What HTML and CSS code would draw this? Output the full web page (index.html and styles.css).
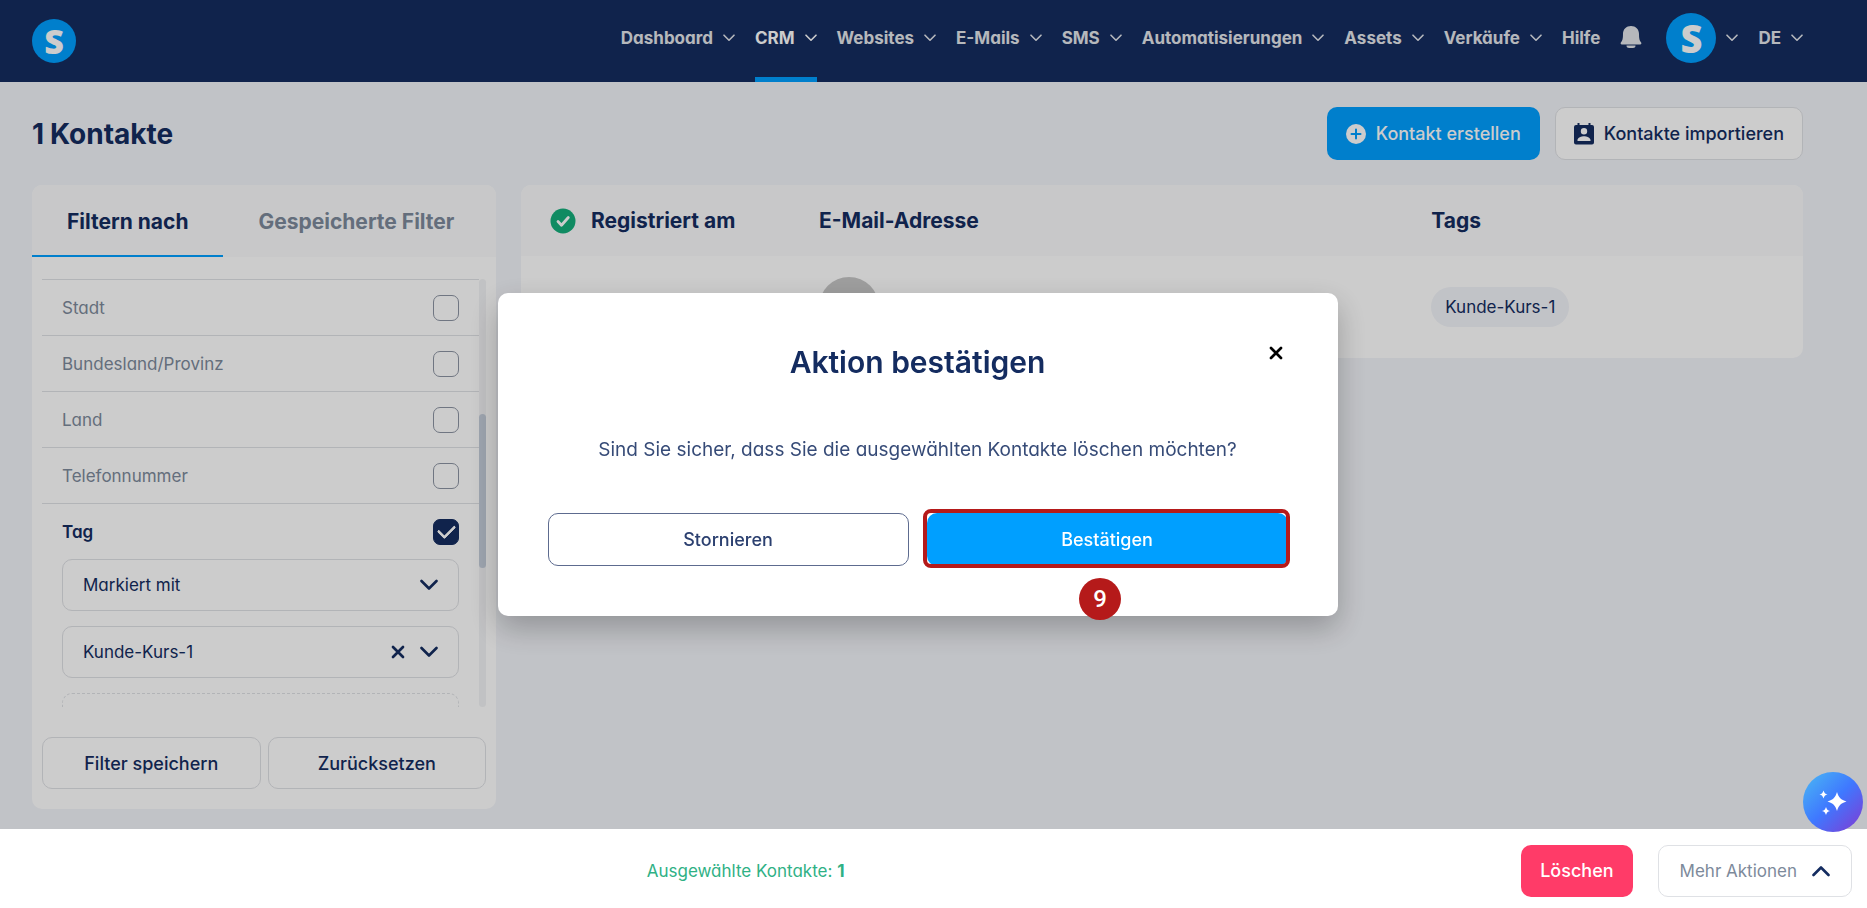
FILE: index.html
```html
<!DOCTYPE html>
<html lang="de">
<head>
    <meta charset="UTF-8">
    <meta name="viewport" content="width=device-width, initial-scale=1.0">
    <title>Kontakte</title>
    <link rel="stylesheet" href="styles.css">
</head>
<body>
    <!-- shared icons -->
    <svg class="icon-defs" aria-hidden="true">
        <symbol id="chevron" viewBox="0 0 12 8">
            <path d="M1 1.2l5 5 5-5" fill="none" stroke="currentColor" stroke-width="1.6" stroke-linecap="round" stroke-linejoin="round"/>
        </symbol>
        <symbol id="chevron-bold" viewBox="0 0 18 12">
            <path d="M1.500 2L9 9.500 16.500 2" fill="none" stroke="currentColor" stroke-width="2.6" stroke-linecap="round" stroke-linejoin="round"/>
        </symbol>
        <symbol id="cross" viewBox="0 0 14 14">
            <path d="M2 2l10 10M12 2L2 12" fill="none" stroke="currentColor" stroke-width="2.7" stroke-linecap="round"/>
        </symbol>
    </svg>

    <header class="header">
        <a href="#" class="logo">S</a>
        <nav class="nav">
            <a href="#" class="nav-item">Dashboard <svg class="chevron"><use href="#chevron"/></svg></a>
            <a href="#" class="nav-item active">CRM <svg class="chevron"><use href="#chevron"/></svg></a>
            <a href="#" class="nav-item">Websites <svg class="chevron"><use href="#chevron"/></svg></a>
            <a href="#" class="nav-item">E-Mails <svg class="chevron"><use href="#chevron"/></svg></a>
            <a href="#" class="nav-item">SMS <svg class="chevron"><use href="#chevron"/></svg></a>
            <a href="#" class="nav-item">Automatisierungen <svg class="chevron"><use href="#chevron"/></svg></a>
            <a href="#" class="nav-item">Assets <svg class="chevron"><use href="#chevron"/></svg></a>
            <a href="#" class="nav-item">Verkäufe <svg class="chevron"><use href="#chevron"/></svg></a>
            <a href="#" class="nav-item">Hilfe</a>
            <button class="bell" aria-label="Benachrichtigungen">
                <svg width="22" height="24" viewBox="0 0 22 24" fill="currentColor">
                    <path d="M11 1c4.600 0 8 3.200 8 8 0 4.600.5 6.700 2 8.300.8.900.3 2.200-.8 2.200H1.800c-1.100 0-1.600-1.300-.8-2.200C2.500 15.700 3 13.600 3 9c0-4.800 3.400-8 8-8z"/>
                    <path d="M6.500 20.500h9c0 1.800-1.200 2.500-2.500 2.500H9c-1.300 0-2.500-.7-2.500-2.500z"/>
                </svg>
            </button>
            <button class="nav-item account"><span class="logo avatar-logo">S</span> <svg class="chevron"><use href="#chevron"/></svg></button>
            <button class="nav-item language">DE <svg class="chevron"><use href="#chevron"/></svg></button>
        </nav>
    </header>

    <main class="page">
        <div class="page-head">
            <h1><span>1</span><span>Kontakte</span></h1>
            <div class="page-actions">
                <button class="btn btn-primary">
                    <svg width="20" height="20" viewBox="0 0 20 20"><circle cx="10" cy="10" r="10" fill="#fff"/><path d="M10 5.500v9M5.500 10h9" stroke="#009fff" stroke-width="2" stroke-linecap="round"/></svg>
                    Kontakt erstellen
                </button>
                <button class="btn btn-outline">
                    <svg width="20" height="22" viewBox="0 0 20 22"><path fill="currentColor" fill-rule="evenodd" d="M3.500 0h2v2h9V0h2v2H18a2 2 0 0 1 2 2v15.500a2 2 0 0 1-2 2H2a2 2 0 0 1-2-2V4a2 2 0 0 1 2-2h1.500zM10 5a3.200 3.200 0 1 0 0 6.400A3.200 3.200 0 0 0 10 5zM3.500 18h13v-1c0-2.500-4-3.800-6.500-3.800S3.500 14.500 3.500 17z"/></svg>
                    Kontakte importieren
                </button>
            </div>
        </div>

        <div class="columns">
            <section class="card filters">
                <div class="tabs">
                    <button class="tab active">Filtern nach</button>
                    <button class="tab">Gespeicherte Filter</button>
                </div>
                <div class="filter-scroll">
                    <div class="filter-list">
                        <label class="filter-row">Stadt <input type="checkbox"></label>
                        <label class="filter-row">Bundesland/Provinz <input type="checkbox"></label>
                        <label class="filter-row">Land <input type="checkbox"></label>
                        <label class="filter-row">Telefonnummer <input type="checkbox"></label>
                        <label class="filter-row checked">Tag <input type="checkbox" checked></label>
                        <div class="filter-fields">
                            <div class="field">
                                <select aria-label="Bedingung"><option>Markiert mit</option></select>
                                <svg class="chevron-bold"><use href="#chevron-bold"/></svg>
                            </div>
                            <div class="field">
                                <select aria-label="Tag auswählen"><option>Kunde-Kurs-1</option></select>
                                <button class="clear" aria-label="Entfernen"><svg class="cross"><use href="#cross"/></svg></button>
                                <svg class="chevron-bold"><use href="#chevron-bold"/></svg>
                            </div>
                            <div class="field field-dashed"></div>
                        </div>
                    </div>
                    <div class="scrollbar"><div class="scrollbar-thumb"></div></div>
                </div>
                <div class="filter-actions">
                    <button class="btn btn-outline">Filter speichern</button>
                    <button class="btn btn-outline">Zurücksetzen</button>
                </div>
            </section>

            <section class="card contacts">
                <table>
                    <thead>
                        <tr>
                            <th class="col-date">
                                <div class="date-head">
                                    <svg width="26" height="26" viewBox="0 0 26 26"><circle cx="13" cy="13" r="12.500" fill="#14ae7b"/><path d="M8 13.500l3.500 3.700L18.300 9.500" fill="none" stroke="#fff" stroke-width="2.800" stroke-linecap="round" stroke-linejoin="round"/></svg>
                                    Registriert am
                                </div>
                            </th>
                            <th>E-Mail-Adresse</th>
                            <th class="col-tags">Tags</th>
                        </tr>
                    </thead>
                    <tbody>
                        <tr>
                            <td></td>
                            <td><div class="avatar"></div></td>
                            <td><span class="chip">Kunde-Kurs-1</span></td>
                        </tr>
                    </tbody>
                </table>
            </section>
        </div>
    </main>

    <div class="overlay">
        <div class="modal" role="dialog" aria-labelledby="modal-title">
            <button class="modal-close" aria-label="Schließen"><svg class="cross"><use href="#cross"/></svg></button>
            <h2 id="modal-title">Aktion bestätigen</h2>
            <p>Sind Sie sicher, dass Sie die ausgewählten Kontakte löschen möchten?</p>
            <div class="modal-actions">
                <button class="btn btn-cancel">Stornieren</button>
                <div class="confirm">
                    <button class="btn btn-primary">Bestätigen</button>
                    <span class="step">9</span>
                </div>
            </div>
        </div>
    </div>

    <footer class="bulk-bar">
        <p class="selected">Ausgewählte Kontakte: <strong>1</strong></p>
        <div class="bulk-actions">
            <button class="btn btn-danger">Löschen</button>
            <button class="btn btn-more">Mehr Aktionen <svg class="chevron-bold up"><use href="#chevron-bold"/></svg></button>
        </div>
    </footer>

    <button class="assistant" aria-label="Assistent">
        <svg width="28" height="28" viewBox="0 0 28 28" fill="#fff">
            <path d="M18 4c1.800 5.700 3.800 7.700 9.500 9.500-5.700 1.800-7.700 3.800-9.500 9.500-1.800-5.700-3.800-7.700-9.500-9.500C14.200 11.700 16.200 9.700 18 4z"/>
            <path d="M4.500 2.500c.8 2.500 1.500 3.200 4 4-2.500.8-3.200 1.500-4 4-.8-2.500-1.500-3.200-4-4 2.500-.8 3.200-1.500 4-4z"/>
            <path d="M7 19c.8 2.500 1.500 3.200 4 4-2.500.8-3.200 1.500-4 4-.8-2.500-1.500-3.200-4-4 2.500-.8 3.200-1.500 4-4z"/>
        </svg>
    </button>
</body>
</html>
```

FILE: styles.css
```css
:root {
    --navy: #142c60;
    --blue: #009fff;
    --bg: #f2f4f9;
    --border: #dfe1e5;
    --muted: #7d8a9b;
    --red: #b51a1a;
}

* {
    box-sizing: border-box;
}

body {
    margin: 0;
    min-height: 100vh;
    background-color: var(--bg);
    color: var(--navy);
    font-family: Inter, sans-serif;
    font-size: 18px;
}

h1, h2, p {
    margin: 0;
}

button {
    font: inherit;
    color: inherit;
    background: none;
    border: none;
    padding: 0;
    cursor: pointer;
}

svg {
    display: block;
    flex-shrink: 0;
}

.icon-defs {
    position: absolute;
    width: 0;
    height: 0;
}

.chevron {
    width: 12px;
    height: 8px;
}

.chevron-bold {
    width: 18px;
    height: 12px;
}

.chevron-bold.up {
    transform: rotate(180deg);
}

.cross {
    width: 14px;
    height: 14px;
}

/* Header */
.header {
    display: flex;
    justify-content: space-between;
    align-items: center;
    height: 82px;
    padding: 0 64px 0 32px;
    background-color: var(--navy);
    color: #fff;
}

.logo {
    display: flex;
    justify-content: center;
    align-items: center;
    width: 44px;
    height: 44px;
    border-radius: 50%;
    background-color: var(--blue);
    color: #fff;
    font-family: "Open Sans", sans-serif;
    font-size: 34px;
    font-weight: 800;
    line-height: 1;
    text-decoration: none;
}

.avatar-logo {
    width: 50px;
    height: 50px;
    font-size: 38px;
}

.nav {
    display: flex;
    gap: 20px;
    height: 100%;
}

.nav-item {
    display: flex;
    align-items: center;
    gap: 10px;
    padding-bottom: 6px;
    border-top: 5px solid transparent;
    border-bottom: 5px solid transparent;
    color: #e4e7ec;
    font-size: 17px;
    font-weight: 700;
    font-feature-settings: "cv11";
    text-decoration: none;
}

.nav-item.active {
    color: #fff;
    border-bottom-color: var(--blue);
}

.bell {
    color: #e4e7ec;
    padding-bottom: 8px;
    margin-right: 4px;
}

/* Page */
.page {
    padding: 25px 64px 100px 32px;
}

.page-head {
    display: flex;
    justify-content: space-between;
    align-items: center;
    margin-bottom: 25px;
}

.page-head h1 {
    display: flex;
    gap: 6px;
    font-size: 28px;
    font-weight: 700;
}

.page-actions {
    display: flex;
    gap: 15px;
}

.btn {
    display: flex;
    justify-content: center;
    align-items: center;
    gap: 10px;
    height: 53px;
    padding: 0 18px;
    border: 1px solid transparent;
    border-radius: 10px;
    font-weight: 500;
    white-space: nowrap;
}

.btn-primary {
    background-color: var(--blue);
    color: #fff;
}

.btn-outline {
    background-color: #fff;
    border-color: var(--border);
}

.columns {
    display: flex;
    align-items: flex-start;
    gap: 25px;
}

.card {
    background-color: #fff;
    border-radius: 10px;
    overflow: hidden;
}

/* Filters */
.filters {
    flex: 0 0 464px;
}

.tabs {
    display: flex;
    height: 72px;
    background-color: #fafbfc;
}

.tab {
    padding: 0 35px;
    border-top: 2px solid transparent;
    border-bottom: 2px solid transparent;
    color: var(--muted);
    font-size: 21px;
    font-weight: 700;
    white-space: nowrap;
}

.tab.active {
    color: var(--navy);
    border-bottom-color: var(--blue);
}

.filter-scroll {
    display: flex;
    height: calc(100vh - 480px);
    margin: 22px 10px 30px;
}

.filter-list {
    flex: 1;
    overflow: hidden;
    font-feature-settings: "cv11";
}

.filter-row {
    display: flex;
    justify-content: space-between;
    align-items: center;
    height: 56px;
    padding: 0 20px;
    border-top: 1px solid var(--border);
    color: var(--muted);
    font-size: 17px;
}

.filter-row.checked {
    color: var(--navy);
    font-weight: 600;
}

.filter-row input {
    appearance: none;
    width: 26px;
    height: 26px;
    margin: 0;
    border: 1px solid #8d94a3;
    border-radius: 7px;
}

.filter-row input:checked {
    display: grid;
    place-items: center;
    background-color: var(--navy);
    border-color: var(--navy);
}

.filter-row input:checked::before {
    content: "";
    width: 14px;
    height: 8px;
    margin-bottom: 5px;
    border-left: 3px solid #fff;
    border-bottom: 3px solid #fff;
    border-radius: 2px;
    transform: rotate(-45deg);
}

.filter-fields {
    display: flex;
    flex-direction: column;
    gap: 15px;
    padding: 0 20px;
}

.field {
    display: flex;
    align-items: center;
    gap: 15px;
    flex-shrink: 0;
    height: 52px;
    padding: 0 20px;
    border: 1px solid var(--border);
    border-radius: 10px;
}

.field-dashed {
    border-style: dashed;
}

.field select {
    flex: 1;
    appearance: none;
    padding: 0;
    border: none;
    background: none;
    color: var(--navy);
    font: inherit;
    font-size: 17px;
    font-feature-settings: "cv11";
}

.scrollbar {
    display: flow-root;
    width: 7px;
    border-radius: 4px;
    background-color: #f2f3f5;
}

.scrollbar-thumb {
    height: 36%;
    margin-top: 135px;
    border-radius: 4px;
    background-color: #c5cedb;
}

.filter-actions {
    display: grid;
    grid-template-columns: 1fr 1fr;
    gap: 7px;
    padding: 0 10px 20px;
}

.filter-actions .btn,
.bulk-actions .btn {
    height: 52px;
}

/* Contacts table */
.contacts {
    flex: 1;
}

table {
    width: 100%;
    border-collapse: collapse;
    table-layout: fixed;
}

th, td {
    padding: 0;
    text-align: left;
}

thead {
    background-color: #fafbfc;
}

th {
    height: 71px;
    font-size: 21px;
    font-weight: 700;
}

td {
    height: 102px;
}

.col-date {
    width: 298px;
}

.col-tags {
    width: 29%;
}

.date-head {
    display: flex;
    align-items: center;
    gap: 15px;
    padding-left: 29px;
}

.avatar {
    width: 60px;
    height: 60px;
    border-radius: 50%;
    background-color: #c6c6c6;
}

.chip {
    display: inline-block;
    padding: 0 14px;
    border-radius: 20px;
    background-color: var(--bg);
    font-size: 17px;
    line-height: 40px;
    font-feature-settings: "cv11";
}

/* Modal */
.overlay {
    position: fixed;
    inset: 0;
    display: grid;
    place-items: center;
    padding-right: 32px;
    background-color: rgba(0, 0, 0, 0.2);
}

.modal {
    position: relative;
    width: 840px;
    max-width: 90%;
    padding: 50px;
    border-radius: 10px;
    background-color: #fff;
    box-shadow: 0 12px 30px rgba(0, 0, 0, 0.25);
    text-align: center;
}

.modal h2 {
    font-size: 30px;
    font-weight: 600;
    line-height: 38px;
}

.modal p {
    margin: 56px 0 50px;
    font-size: 19px;
    line-height: 26px;
    font-feature-settings: "cv11";
    opacity: 0.85;
}

.modal-close {
    position: absolute;
    top: 53px;
    right: 55px;
    color: #000;
}

.modal-actions {
    display: grid;
    grid-template-columns: 1fr 1fr;
    gap: 18px;
}

.btn-cancel {
    border-color: #5d6b8f;
    color: #2c4070;
}

.confirm {
    position: relative;
}

.confirm .btn {
    width: 100%;
}

/* Red frame round the confirm button */
.confirm::after {
    content: "";
    position: absolute;
    inset: -4px -2px -2px -4px;
    border: 4px solid var(--red);
    border-radius: 8px;
    pointer-events: none;
}

.step {
    position: absolute;
    top: 65px;
    left: calc(50% - 28px);
    width: 42px;
    height: 42px;
    border-radius: 50%;
    background-color: var(--red);
    color: #fff;
    font-family: Roboto, sans-serif;
    font-size: 24px;
    font-weight: 500;
    line-height: 42px;
}

/* Bottom bar */
.bulk-bar {
    position: fixed;
    left: 0;
    right: 0;
    bottom: 0;
    display: flex;
    align-items: center;
    gap: 30px;
    height: 79px;
    padding: 4px 15px 0 0;
    background-color: #fff;
}

.selected {
    flex: 1;
    text-align: center;
    color: #2fb185;
    font-size: 17px;
    font-feature-settings: "cv11";
}

.bulk-actions {
    display: flex;
    gap: 25px;
}

.btn-danger {
    background-color: #ff3b68;
    color: #fff;
}

.bulk-actions .btn-more {
    gap: 15px;
    padding: 0 21px;
    border-color: var(--border);
    color: var(--muted);
    font-size: 17px;
    font-weight: 400;
    font-feature-settings: "cv11";
}

.btn-more svg {
    color: var(--navy);
}

.assistant {
    position: fixed;
    right: 4px;
    bottom: 76px;
    display: grid;
    place-items: center;
    width: 60px;
    height: 60px;
    border-radius: 50%;
    background: linear-gradient(135deg, #48adf5 10%, #3f78ff 50%, #7c3fd6 95%);
}
```
